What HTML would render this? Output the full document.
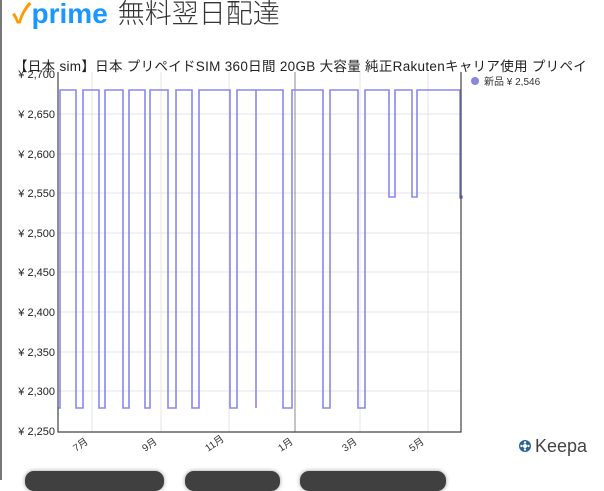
<!DOCTYPE html>
<html><head><meta charset="utf-8"><style>
html,body{margin:0;padding:0;width:604px;height:480px;overflow:hidden;background:#fff;font-family:"Liberation Sans","Noto Sans CJK JP",sans-serif;}
.lb{position:absolute;left:0;top:0;width:2px;height:480px;background:#777;}
.hdr{position:absolute;left:12px;top:-8px;font-size:27px;white-space:nowrap;}
.hdr .p{color:#1a98ff;font-weight:bold;font-size:28px;}
.hdr .j{color:#333;margin-left:10px;font-weight:300;}
.t{position:absolute;left:14px;top:55px;font-size:13.5px;color:#222;white-space:nowrap;letter-spacing:0.3px;}
.btn{position:absolute;top:471px;height:20px;background:#404040;border-radius:9px;box-shadow:0 0 4px rgba(0,0,0,.4);}
.k{position:absolute;top:436px;font-size:18px;color:#444;}
</style></head><body>
<div class="lb"></div>
<div class="hdr"><span style="color:#f90;font-weight:bold">✓</span><span class="p">prime</span><span class="j">無料翌日配達</span></div>
<div class="t">【日本 sim】日本 プリペイドSIM 360日間 20GB 大容量 純正Rakutenキャリア使用 プリペイ</div>
<svg style="position:absolute;left:0;top:0" width="604" height="480" font-family="Liberation Sans, Noto Sans CJK JP, sans-serif">
<g stroke="#e4e4e4" stroke-width="1">
<line x1="58" x2="461" y1="114" y2="114"/><line x1="58" x2="461" y1="154" y2="154"/><line x1="58" x2="461" y1="193" y2="193"/><line x1="58" x2="461" y1="233" y2="233"/><line x1="58" x2="461" y1="272" y2="272"/><line x1="58" x2="461" y1="312" y2="312"/><line x1="58" x2="461" y1="352" y2="352"/><line x1="58" x2="461" y1="391" y2="391"/>
<line x1="92" x2="92" y1="72" y2="432"/><line x1="161" x2="161" y1="72" y2="432"/><line x1="229" x2="229" y1="72" y2="432"/><line x1="360" x2="360" y1="72" y2="432"/><line x1="428" x2="428" y1="72" y2="432"/>
</g>
<line x1="295" x2="295" y1="72" y2="432" stroke="#888"/>
<path d="M58,408 H60 V90 H76 V408 H83 V90 H99 V408 H105 V90 H123 V408 H129 V90 H145 V408 H150 V90 H168 V408 H176 V90 H192 V408 H199 V90 H230 V408 H237 V90 H256 V408 V90 H283 V408 H292 V90 H323 V408 H330 V90 H358 V408 H365 V90 H389 V197 H395 V90 H412 V197 H417 V90 H460 V197" fill="none" stroke="#8888ee" stroke-width="1.6"/>
<circle cx="461" cy="197" r="2" fill="#8888ee"/>
<path d="M58,72 V432 H461 V72" fill="none" stroke="#444" stroke-width="1.2"/>
<g font-size="11" fill="#222" text-anchor="end">
<text x="55" y="78">¥ 2,700</text><text x="55" y="118">¥ 2,650</text><text x="55" y="158">¥ 2,600</text><text x="55" y="197">¥ 2,550</text><text x="55" y="237">¥ 2,500</text><text x="55" y="276">¥ 2,450</text><text x="55" y="316">¥ 2,400</text><text x="55" y="356">¥ 2,350</text><text x="55" y="395">¥ 2,300</text><text x="55" y="435">¥ 2,250</text>
</g>
<g font-size="10" fill="#333">
<text transform="translate(76,452) rotate(-35)">7月</text><text transform="translate(145,452) rotate(-35)">9月</text><text transform="translate(208,452) rotate(-35)">11月</text><text transform="translate(281,452) rotate(-35)">1月</text><text transform="translate(345,452) rotate(-35)">3月</text><text transform="translate(412,452) rotate(-35)">5月</text>
</g>
<circle cx="475" cy="81" r="4" fill="#8888dd"/>
<text x="484" y="85" font-size="10" fill="#333">新品 ¥ 2,546</text>
<circle cx="525" cy="446" r="6" fill="#2a6496"/>
<circle cx="525" cy="446" r="2" fill="#fff"/>
<circle cx="525" cy="442.5" r="1.2" fill="#fff"/><circle cx="525" cy="449.5" r="1.2" fill="#fff"/><circle cx="521.5" cy="446" r="1.2" fill="#fff"/><circle cx="528.5" cy="446" r="1.2" fill="#fff"/>
</svg>
<div class="k" style="left:535px">Keepa</div>
<div class="btn" style="left:25px;width:139px"></div>
<div class="btn" style="left:185px;width:95px"></div>
<div class="btn" style="left:300px;width:146px"></div>
</body></html>
